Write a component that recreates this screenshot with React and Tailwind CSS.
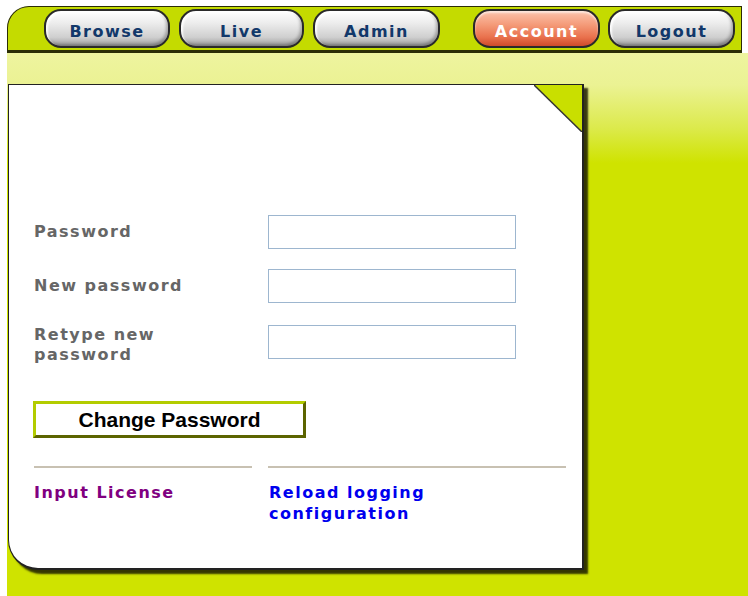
const navItems = [
    { label: "Browse", width: "w-[126px]", gap: "ml-0" },
    { label: "Live", width: "w-[125px]", gap: "ml-[9px]" },
    { label: "Admin", width: "w-[127px]", gap: "ml-[9px]" },
    { label: "Account", width: "w-[127px]", gap: "ml-[33px]", active: true },
    { label: "Logout", width: "w-[127px]", gap: "ml-[8px]" },
];

const verdana = "font-['DejaVu_Sans','Verdana',sans-serif]";

const NavButton = ({ label, width, gap, active }) => (
    <button
        className={`${gap} ${width} h-[39px] rounded-[17px] border-2 border-[#2a2a2a] pt-[7px] text-[16px] font-bold tracking-[1.5px] ${verdana} ${
            active
                ? "bg-[linear-gradient(to_bottom,#fbc3ac_0%,#f49a78_40%,#e9714d_75%,#cf4a2a_100%)] text-white shadow-[inset_0_2px_2px_rgba(255,255,255,0.6)]"
                : "bg-[linear-gradient(to_bottom,#ffffff_0%,#ececec_35%,#cfcfcf_75%,#9c9c9c_100%)] text-[#12386a] shadow-[inset_2px_2px_2px_rgba(255,255,255,0.9),inset_-2px_-2px_3px_rgba(0,0,0,0.25)]"
        }`}
    >
        {label}
    </button>
);

const Field = ({ label, className = "", twoLine }) => (
    <div className={`grid h-[34px] grid-cols-[234px_248px] ${twoLine ? "items-start" : "items-center"} ${className}`}>
        <label className={`text-[16px] font-bold leading-[20px] tracking-[1.5px] text-[#666666] ${verdana}`}>
            {label}
        </label>
        <input
            type="password"
            className="h-[34px] border border-[#9db6cf] bg-white px-2 outline-none"
        />
    </div>
);

export default function App() {
    return (
        <div className="min-h-[596px] w-[748px] bg-white pl-[7px] pt-[6px]">
            <nav className="mr-[6px] flex h-[47px] items-start rounded-tl-[22px] border border-b-[3px] border-[#2b2d05] bg-[#c4db00] pl-[36px] pt-[2px]">
                {navItems.map((item) => (
                    <NavButton key={item.label} {...item} />
                ))}
            </nav>

            <main className="min-h-[543px] bg-[linear-gradient(to_bottom,#eef49f_0px,#ebf293_32px,#dcea4c_75px,#cfe300_110px)] pl-[1px] pt-[31px]">
                <div className="relative h-[486px] w-[576px] rounded-bl-[30px] border border-r-2 border-b-2 border-[#222222] bg-white pl-[25px] pt-[130px] shadow-[4px_4px_2px_rgba(25,25,0,0.85)]">
                    {/* folded corner */}
                    <svg className="absolute right-0 top-0" width="48" height="47" viewBox="0 0 48 47">
                        <polygon points="0,0 48,0 48,47" fill="#c9df00" />
                        <line x1="0" y1="0" x2="48" y2="47" stroke="#333" strokeWidth="1.5" />
                    </svg>

                    <Field label="Password" />
                    <Field label="New password" className="mt-[20px]" />
                    <Field
                        label={
                            <>
                                Retype new
                                <br />
                                password
                            </>
                        }
                        className="mt-[22px]"
                        twoLine
                    />

                    <button className="-ml-[1px] mt-[42px] block h-[37px] w-[273px] border-[3px] border-b-[#5c6400] border-l-[#b3cc00] border-r-[#5c6400] border-t-[#b3cc00] bg-white font-['Liberation_Sans',Arial,sans-serif] text-[21px] font-bold leading-none text-black">
                        Change Password
                    </button>

                    <div className="mt-[28px] grid grid-cols-[218px_298px] gap-x-[16px]">
                        <div className="h-[2px] bg-[#c8c1b2]" />
                        <div className="h-[2px] bg-[#c8c1b2]" />
                        <a
                            href="#"
                            className={`mt-[14px] text-[16px] font-bold leading-[21px] tracking-[1.5px] text-[#800080] ${verdana}`}
                        >
                            Input License
                        </a>
                        <a
                            href="#"
                            className={`mt-[14px] pl-[1px] text-[16px] font-bold leading-[21px] tracking-[1.5px] text-[#0000ee] ${verdana}`}
                        >
                            Reload logging
                            <br />
                            configuration
                        </a>
                    </div>
                </div>
            </main>
        </div>
    );
}
